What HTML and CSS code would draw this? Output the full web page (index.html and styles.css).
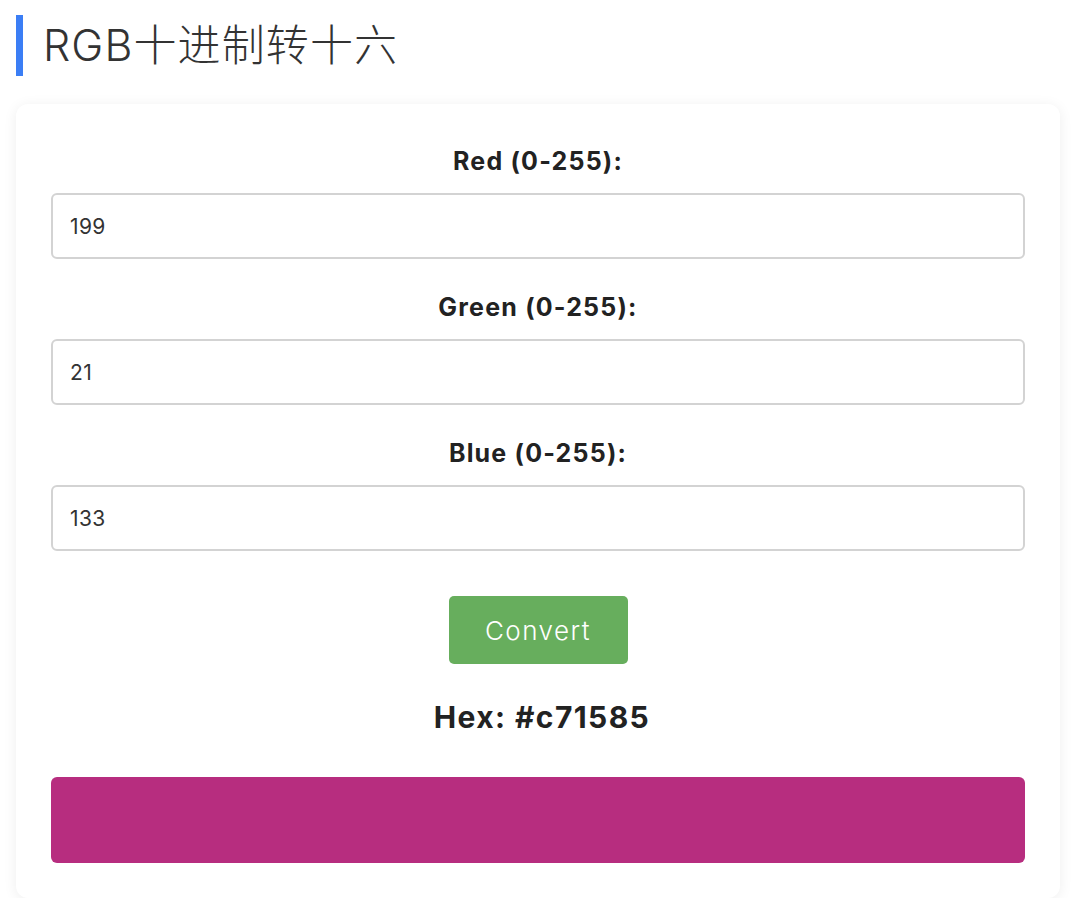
FILE: index.html
```html
<!DOCTYPE html>
<html lang="zh">
<head>
<meta charset="utf-8">
<title>RGB十进制转十六</title>
<link rel="stylesheet" href="styles.css">
</head>
<body>
<h1 class="title">RGB十进制转十六</h1>
<div class="card">
  <div class="field">
    <label class="label" for="r">Red (0-255):</label>
    <input class="input" id="r" type="text" value="199">
  </div>
  <div class="field">
    <label class="label" for="g">Green (0-255):</label>
    <input class="input" id="g" type="text" value="21">
  </div>
  <div class="field">
    <label class="label" for="b">Blue (0-255):</label>
    <input class="input" id="b" type="text" value="133">
  </div>
  <div class="actions">
    <button class="btn" type="button">Convert</button>
  </div>
  <div class="result">Hex: #c71585</div>
  <div class="swatch"></div>
</div>
</body>
</html>
```
FILE: styles.css
```css
html, body {
  margin: 0;
  background: #ffffff;
}
body {
  padding: 15px 20px 0 16px;
  font-family: Inter, "Noto Sans CJK SC", sans-serif;
  color: #222;
}
.title {
  margin: 0 0 28px 0;
  height: 61px;
  border-left: 7px solid #3b7ef5;
  padding-left: 20px;
  font-size: 43px;
  line-height: 61px;
  font-weight: 300;
  color: #333;
  letter-spacing: 1.1px;
}
.card {
  background: #fff;
  border-radius: 12px;
  box-shadow: 0 2px 14px rgba(0, 0, 0, 0.07);
  padding: 41px 35px 35px 35px;
}
.field {
  display: flex;
  flex-direction: column;
  margin-bottom: 32px;
}
.label {
  text-align: center;
  font-size: 25px;
  line-height: 32px;
  font-weight: 700;
  color: #222;
  margin-bottom: 16px;
  letter-spacing: 1.2px;
}
.input {
  box-sizing: border-box;
  height: 66px;
  width: 100%;
  border: 2px solid #d3d3d3;
  border-radius: 6px;
  padding: 0 17px;
  font-family: Inter, sans-serif;
  font-size: 21px;
  color: #333;
  background: #fff;
  outline: none;
  letter-spacing: 0.4px;
}
.field:nth-child(3) {
  margin-bottom: 45px;
}
.actions {
  display: flex;
  justify-content: center;
}
.btn {
  box-sizing: border-box;
  height: 68px;
  width: 179px;
  padding: 0;
  border: none;
  border-radius: 5px;
  background: #67ae5d;
  color: #fff;
  font-family: Inter, sans-serif;
  font-size: 26px;
  font-weight: 300;
  letter-spacing: 1.5px;
}
.result {
  margin-top: 34px;
  padding-left: 8px;
  text-align: center;
  font-size: 30px;
  line-height: 38px;
  font-weight: 700;
  color: #222;
  letter-spacing: 1.4px;
}
.swatch {
  margin-top: 41px;
  height: 86px;
  border-radius: 6px;
  background: #b72d7f;
}
```
